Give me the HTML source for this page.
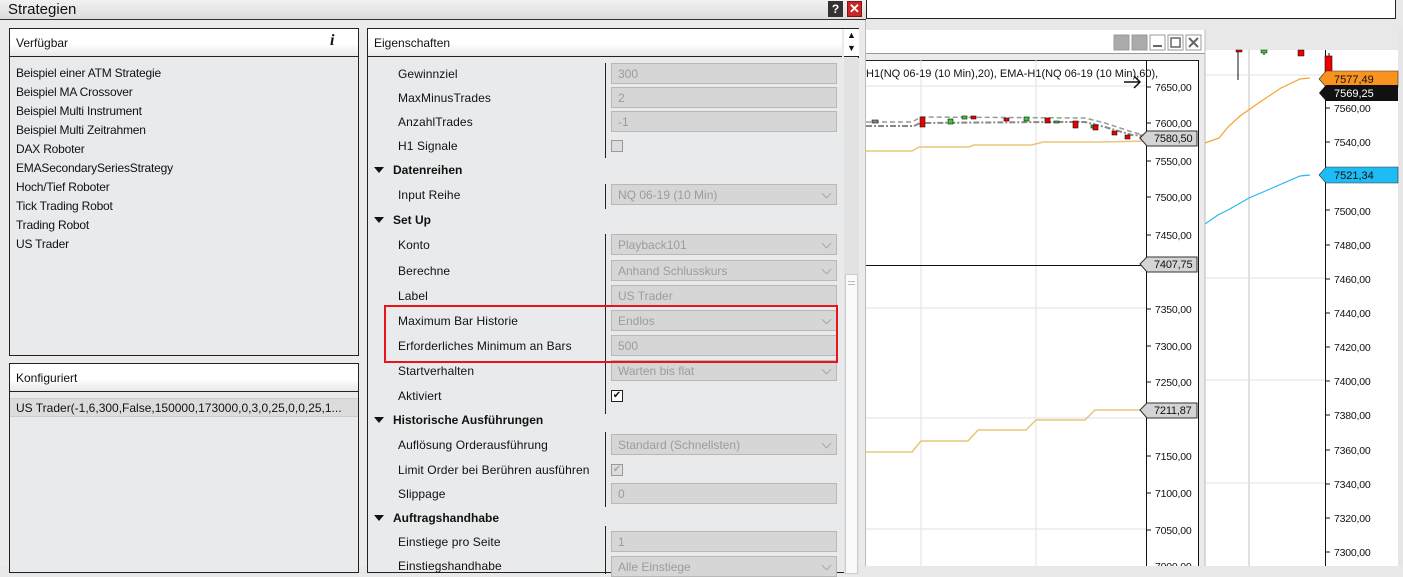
<!DOCTYPE html>
<html><head><meta charset="utf-8"><style>
*{margin:0;padding:0;box-sizing:border-box}
body{width:1403px;height:566px;overflow:hidden;background:#e8e8e8;font-family:"Liberation Sans",Arial,sans-serif;font-size:12px;color:#111;position:relative}
.a{position:absolute}
.dlg{left:0;top:0;width:866px;height:566px;background:#ebebeb}
.title{left:0;top:0;width:866px;height:20px;background:linear-gradient(#f2f2f2,#dcdcdc);border-bottom:1px solid #333;font-size:15px;padding:1px 0 0 8px}
.box{background:#e9eaeb;border:1px solid #222}
.hdr{position:absolute;left:0;top:0;right:0;height:28px;background:linear-gradient(#fff 55%,#e8e8e8);border-bottom:1px solid #222;padding:7px 0 0 6px;font-size:12px}
.it{position:absolute;left:6px;font-size:12px;letter-spacing:-0.2px}
.lb{position:absolute;left:30px;font-size:12px;letter-spacing:0.1px}
.sec{position:absolute;left:6px;font-weight:bold;font-size:12px}
.sec:before{content:"";display:inline-block;border-left:5px solid transparent;border-right:5px solid transparent;border-top:6px solid #111;margin:0 9px 1px 0}
.val{position:absolute;left:243px;width:226px;height:21px;background:#d6d6d6;border:1px solid #b8b8b8;color:#9c9c9c;padding:3px 0 0 6px;font-size:12px}
.dd:after{content:"";position:absolute;right:6px;top:5px;width:6px;height:6px;border-right:1.5px solid #a8a8a8;border-bottom:1.5px solid #a8a8a8;transform:rotate(45deg)}
.cb{position:absolute;left:243px;width:12px;height:12px;border:1px solid #999;background:#ddd}
.dv{position:absolute;left:237px;width:1px;background:#222}
svg text{font-family:"Liberation Sans",sans-serif}
</style></head><body>
<div class="a" style="left:866px;top:0;width:530px;height:19px;background:#fff;border:1px solid #222;border-top:none"></div>
<svg class="a" style="left:866px;top:0" width="537" height="566" viewBox="866 0 537 566">
 <rect x="1205" y="50" width="193" height="516" fill="#fff"/>
 <rect x="1398" y="30" width="5" height="536" fill="#e6e6e6"/>
 <line x1="1249" y1="50" x2="1249" y2="566" stroke="#c0c0c0"/>
 <g stroke="#e2e2e2"><line x1="1205" y1="75" x2="1325" y2="75"/><line x1="1205" y1="278" x2="1325" y2="278"/><line x1="1205" y1="380" x2="1325" y2="380"/><line x1="1205" y1="483" x2="1325" y2="483"/></g>
 <line x1="1325.5" y1="50" x2="1325.5" y2="566" stroke="#111"/>
 <g stroke="#111"><line x1="1238" y1="50" x2="1238" y2="80"/><line x1="1264" y1="50" x2="1264" y2="55"/><line x1="1301" y1="50" x2="1301" y2="55"/></g>
 <rect x="1236" y="50" width="6" height="2" fill="#e00" stroke="#111" stroke-width=".5"/>
 <rect x="1261" y="50" width="6" height="3" fill="#3c3" stroke="#111" stroke-width=".5"/>
 <rect x="1298" y="50" width="6" height="6" fill="#e00" stroke="#111" stroke-width=".5"/>
 <line x1="1329" y1="53" x2="1329" y2="93" stroke="#111"/>
 <rect x="1325" y="56" width="7" height="36" fill="#e00" stroke="#111" stroke-width=".6"/>
 <polyline points="1205,143 1219,138 1228,127 1240,116 1260,102 1281,88 1300,79 1310,78" fill="none" stroke="#f7a030" stroke-width="1.2"/>
 <polyline points="1205,224 1218,215 1228,210 1249,198 1270,189 1300,176 1310,175" fill="none" stroke="#27b8f2" stroke-width="1.2"/>
 <g font-size="10.5" fill="#111" letter-spacing="-0.2">
  <text x="1334" y="112">7560,00</text><text x="1334" y="146">7540,00</text><text x="1334" y="215">7500,00</text><text x="1334" y="249">7480,00</text><text x="1334" y="283">7460,00</text><text x="1334" y="317">7440,00</text><text x="1334" y="351">7420,00</text><text x="1334" y="385">7400,00</text><text x="1334" y="419">7380,00</text><text x="1334" y="454">7360,00</text><text x="1334" y="488">7340,00</text><text x="1334" y="522">7320,00</text><text x="1334" y="556">7300,00</text>
 </g>
 <g stroke="#111"><line x1="1325" y1="108" x2="1330" y2="108"/><line x1="1325" y1="142" x2="1330" y2="142"/><line x1="1325" y1="210" x2="1330" y2="210"/><line x1="1325" y1="245" x2="1330" y2="245"/><line x1="1325" y1="279" x2="1330" y2="279"/><line x1="1325" y1="313" x2="1330" y2="313"/><line x1="1325" y1="347" x2="1330" y2="347"/><line x1="1325" y1="381" x2="1330" y2="381"/><line x1="1325" y1="415" x2="1330" y2="415"/><line x1="1325" y1="450" x2="1330" y2="450"/><line x1="1325" y1="484" x2="1330" y2="484"/><line x1="1325" y1="518" x2="1330" y2="518"/><line x1="1325" y1="552" x2="1330" y2="552"/></g>
 <polygon points="1319,79 1326,71 1398,71 1398,87 1326,87" fill="#f7931e" stroke="#333" stroke-width=".6"/>
 <text x="1334" y="83" font-size="11" fill="#111">7577,49</text>
 <polygon points="1319,93 1326,85 1398,85 1398,101 1326,101" fill="#111"/>
 <text x="1334" y="97" font-size="11" fill="#fff">7569,25</text>
 <polygon points="1319,175 1326,167 1398,167 1398,183 1326,183" fill="#1ebcf5" stroke="#333" stroke-width=".6"/>
 <text x="1334" y="179" font-size="11" fill="#111">7521,34</text>
 <rect x="866" y="30" width="339" height="536" fill="#ebebeb"/>
 <rect x="866" y="30" width="339" height="23" fill="#fff"/>
 <line x1="866" y1="53.5" x2="1205" y2="53.5" stroke="#999"/>
 <rect x="1114" y="35" width="15" height="15" fill="#aaa" stroke="#999"/>
 <rect x="1132" y="35" width="15" height="15" fill="#aaa" stroke="#999"/>
 <rect x="1150" y="35" width="15" height="15" fill="#fff" stroke="#999"/><line x1="1153" y1="46" x2="1162" y2="46" stroke="#666" stroke-width="2"/>
 <rect x="1168" y="35" width="15" height="15" fill="#fff" stroke="#999"/><rect x="1171" y="38" width="9" height="9" fill="none" stroke="#666" stroke-width="1.5"/>
 <rect x="1186" y="35" width="15" height="15" fill="#fff" stroke="#999"/><path d="M1189 38l9 9M1198 38l-9 9" stroke="#666" stroke-width="2"/>
 <rect x="866" y="60" width="332" height="506" fill="#fff"/>
 <line x1="866" y1="60.5" x2="1198" y2="60.5" stroke="#222"/>
 <g stroke="#e2e2e2"><line x1="921" y1="60" x2="921" y2="566"/><line x1="1036" y1="60" x2="1036" y2="566"/><line x1="866" y1="86" x2="1146" y2="86"/><line x1="866" y1="308" x2="1146" y2="308"/><line x1="866" y1="418" x2="1146" y2="418"/><line x1="866" y1="529" x2="1146" y2="529"/></g>
 <line x1="1146.5" y1="60" x2="1146.5" y2="566" stroke="#111"/>
 <line x1="1198.5" y1="60" x2="1198.5" y2="566" stroke="#111"/>
 <line x1="1205" y1="30" x2="1205" y2="566" stroke="#bbb"/>
 <text x="866" y="77" font-size="11" fill="#111">H1(NQ 06-19 (10 Min),20), EMA-H1(NQ 06-19 (10 Min),60),</text>
 <path d="M1124 82h16M1134 76l6 6-6 6" stroke="#111" stroke-width="1.5" fill="none"/>
 <polyline points="866,151 912,151 919,147 969,147 974,145 1032,145 1043,142 1100,142 1148,141" fill="none" stroke="#e8c57a" stroke-width="1.5"/>
 <polyline points="866,126 914,126 920,123 1050,122 1085,122 1105,127 1132,135 1150,136" fill="none" stroke="#888" stroke-width="2" stroke-dasharray="6,2,2,2"/>
 <polyline points="866,122 912,122 921,117 1085,118 1105,123 1132,132 1148,136" fill="none" stroke="#999" stroke-width="1.5" stroke-dasharray="5,3"/>
 <g stroke="#111" stroke-width=".6">
  <rect x="872" y="120" width="6" height="3" fill="#888"/><rect x="920" y="117" width="5" height="10" fill="#e00"/><rect x="948" y="119" width="5" height="5" fill="#3c3"/><rect x="962" y="116" width="5" height="3" fill="#3c3"/><rect x="971" y="116" width="5" height="3" fill="#e00"/><rect x="1004" y="118" width="5" height="3" fill="#e00"/><rect x="1024" y="117" width="5" height="4" fill="#3c3"/><rect x="1045" y="118" width="5" height="5" fill="#e00"/><rect x="1054" y="121" width="5" height="2" fill="#3c3"/><rect x="1073" y="121" width="5" height="7" fill="#e00"/><rect x="1091" y="125" width="5" height="3" fill="#3c3"/><rect x="1093" y="125" width="5" height="5" fill="#e00"/><rect x="1112" y="131" width="5" height="4" fill="#e00"/><rect x="1125" y="135" width="5" height="4" fill="#e00"/><rect x="1140" y="137" width="5" height="2" fill="#111"/>
 </g>
 <g stroke="#111"><line x1="1146" y1="87" x2="1151" y2="87"/><line x1="1146" y1="123" x2="1151" y2="123"/><line x1="1146" y1="161" x2="1151" y2="161"/><line x1="1146" y1="197" x2="1151" y2="197"/><line x1="1146" y1="235" x2="1151" y2="235"/><line x1="1146" y1="309" x2="1151" y2="309"/><line x1="1146" y1="346" x2="1151" y2="346"/><line x1="1146" y1="382" x2="1151" y2="382"/><line x1="1146" y1="456" x2="1151" y2="456"/><line x1="1146" y1="493" x2="1151" y2="493"/><line x1="1146" y1="530" x2="1151" y2="530"/></g>
 <g font-size="10.5" fill="#111" letter-spacing="-0.2">
  <text x="1155" y="91">7650,00</text><text x="1155" y="127">7600,00</text><text x="1155" y="165">7550,00</text><text x="1155" y="201">7500,00</text><text x="1155" y="239">7450,00</text><text x="1155" y="313">7350,00</text><text x="1155" y="350">7300,00</text><text x="1155" y="386">7250,00</text><text x="1155" y="460">7150,00</text><text x="1155" y="497">7100,00</text><text x="1155" y="534">7050,00</text><text x="1155" y="570">7000,00</text>
 </g>
 <line x1="866" y1="265.5" x2="1146" y2="265.5" stroke="#111"/>
 <polyline points="866,452 912,452 921,441 968,441 978,430 1026,430 1036,420 1085,420 1095,410 1142,410" fill="none" stroke="#e8c57a" stroke-width="1.5"/>
 <polygon points="1140,138 1147,131 1197,131 1197,146 1147,146" fill="#d4d4d4" stroke="#333"/><text x="1154" y="142" font-size="11" fill="#111" letter-spacing="-0.2">7580,50</text>
 <polygon points="1140,264 1147,257 1197,257 1197,272 1147,272" fill="#d4d4d4" stroke="#333"/><text x="1154" y="268" font-size="11" fill="#111" letter-spacing="-0.2">7407,75</text>
 <polygon points="1140,410 1147,403 1197,403 1197,418 1147,418" fill="#d4d4d4" stroke="#333"/><text x="1154" y="414" font-size="11" fill="#111" letter-spacing="-0.2">7211,87</text>
</svg>

<div class="a dlg"></div>
<div class="a title">Strategien</div>
<div class="a" style="left:828px;top:1px;width:15px;height:16px;background:#333;color:#fff;font-weight:bold;font-size:12px;text-align:center;line-height:16px">?</div>
<div class="a" style="left:847px;top:1px;width:15px;height:16px;background:#c62828;border:1px solid #811;color:#fff;font-weight:bold;font-size:13px;text-align:center;line-height:14px">✕</div>
<div class="a" style="left:865px;top:20px;width:1px;height:546px;background:#bbb"></div>

<div class="a box" style="left:9px;top:28px;width:350px;height:328px">
 <div class="hdr">Verfügbar<span style="position:absolute;left:320px;top:3px;font-family:'Liberation Serif',serif;font-style:italic;font-weight:bold;font-size:16px">i</span></div>
 <div class="it" style="top:37px">Beispiel einer ATM Strategie</div>
 <div class="it" style="top:56px">Beispiel MA Crossover</div>
 <div class="it" style="top:75px">Beispiel Multi Instrument</div>
 <div class="it" style="top:94px">Beispiel Multi Zeitrahmen</div>
 <div class="it" style="top:113px">DAX Roboter</div>
 <div class="it" style="top:132px">EMASecondarySeriesStrategy</div>
 <div class="it" style="top:151px">Hoch/Tief Roboter</div>
 <div class="it" style="top:170px">Tick Trading Robot</div>
 <div class="it" style="top:189px">Trading Robot</div>
 <div class="it" style="top:208px">US Trader</div>
</div>
<div class="a box" style="left:9px;top:363px;width:350px;height:210px">
 <div class="hdr">Konfiguriert</div>
 <div class="a" style="left:0;top:34px;width:348px;height:19px;background:#dcdcdc;border-top:1px solid #ccc;border-bottom:1px solid #ccc;padding:2px 0 0 6px">US Trader(-1,6,300,False,150000,173000,0,3,0,25,0,0,25,1...</div>
</div>
<div class="a box" style="left:367px;top:28px;width:492px;height:545px">
 <div class="hdr" style="right:16px">Eigenschaften</div>
 <div class="a" style="left:476px;top:0;width:15px;height:28px;background:#fff;border-bottom:1px solid #222"></div>
 <div class="a" style="left:479px;top:1px;font-size:9px">▲</div>
 <div class="a" style="left:479px;top:14px;font-size:9px">▼</div>
 <div class="a" style="left:476px;top:29px;width:15px;height:516px;background:#e2e2e2"></div>
 <div class="a" style="left:477px;top:245px;width:13px;height:300px;background:#fafafa;border:1px solid #ccc"></div>
 <div class="a" style="left:480px;top:252px;width:7px;height:1px;background:#bbb"></div>
 <div class="a" style="left:480px;top:255px;width:7px;height:1px;background:#bbb"></div>

 <div class="dv" style="top:34px;height:95px"></div>
 <div class="dv" style="top:155px;height:25px"></div>
 <div class="dv" style="top:205px;height:180px"></div>
 <div class="dv" style="top:403px;height:75px"></div>
 <div class="dv" style="top:497px;height:48px"></div>

 <div class="lb" style="top:38px">Gewinnziel</div><div class="val" style="top:34px">300</div>
 <div class="lb" style="top:62px">MaxMinusTrades</div><div class="val" style="top:58px">2</div>
 <div class="lb" style="top:86px">AnzahlTrades</div><div class="val" style="top:82px">-1</div>
 <div class="lb" style="top:110px">H1 Signale</div><div class="cb" style="top:111px"></div>
 <div class="sec" style="top:134px">Datenreihen</div>
 <div class="lb" style="top:159px">Input Reihe</div><div class="val dd" style="top:155px">NQ 06-19 (10 Min)</div>
 <div class="sec" style="top:184px">Set Up</div>
 <div class="lb" style="top:209px">Konto</div><div class="val dd" style="top:205px">Playback101</div>
 <div class="lb" style="top:235px">Berechne</div><div class="val dd" style="top:231px">Anhand Schlusskurs</div>
 <div class="lb" style="top:260px">Label</div><div class="val" style="top:256px">US Trader</div>
 <div class="lb" style="top:285px">Maximum Bar Historie</div><div class="val dd" style="top:281px">Endlos</div>
 <div class="lb" style="top:310px">Erforderliches Minimum an Bars</div><div class="val" style="top:306px">500</div>
 <div class="lb" style="top:335px">Startverhalten</div><div class="val dd" style="top:331px">Warten bis flat</div>
 <div class="lb" style="top:360px">Aktiviert</div><div class="cb" style="top:361px;background:#fff;border-color:#222;font-size:10px;line-height:10px;text-align:center">✔</div>
 <div class="sec" style="top:384px">Historische Ausführungen</div>
 <div class="lb" style="top:409px">Auflösung Orderausführung</div><div class="val dd" style="top:405px">Standard (Schnellsten)</div>
 <div class="lb" style="top:434px">Limit Order bei Berühren ausführen</div><div class="cb" style="top:435px;color:#aaa;font-size:10px;line-height:10px;text-align:center">✔</div>
 <div class="lb" style="top:458px">Slippage</div><div class="val" style="top:454px">0</div>
 <div class="sec" style="top:482px">Auftragshandhabe</div>
 <div class="lb" style="top:506px">Einstiege pro Seite</div><div class="val" style="top:502px">1</div>
 <div class="lb" style="top:530px">Einstiegshandhabe</div><div class="val dd" style="top:527px">Alle Einstiege</div>
</div>
<div class="a" style="left:384px;top:305px;width:454px;height:58px;border:2px solid #e8161b"></div>
</body></html>
